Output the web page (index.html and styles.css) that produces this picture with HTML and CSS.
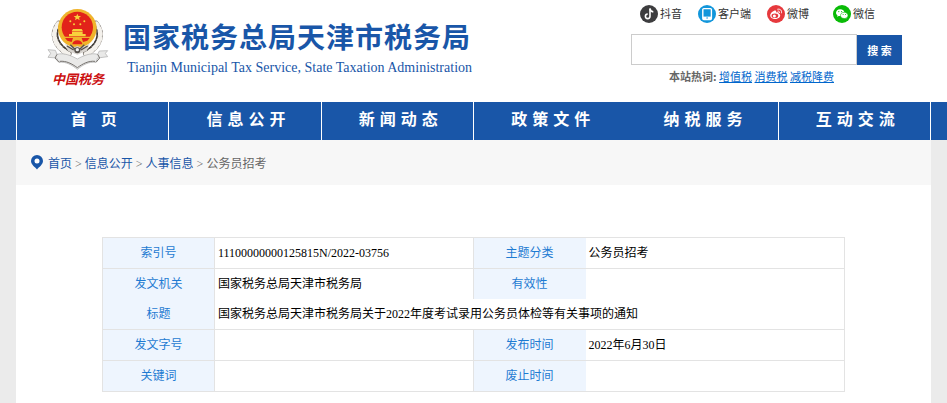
FILE: index.html
```
<!DOCTYPE html>
<html lang="zh-CN">
<head>
    <meta charset="UTF-8">
    <meta name="viewport" content="width=device-width, initial-scale=1.0">
    <title>国家税务总局天津市税务局</title>
    <link rel="stylesheet" href="styles.css">
</head>
<body>
    <header class="header">
        <div class="brand">
            <div class="emblem">
                <svg class="emblem-img" viewBox="22 24 186 186" aria-hidden="true">
                    <!-- wheat ears -->
                    <g fill="none" stroke-linecap="round">
                        <path d="M58 72C36 100 44 136 86 160M168 72C190 100 182 136 140 160" stroke="#77716a" stroke-width="20"/>
                        <path d="M56 72C34 100 42 138 86 162M170 72C192 100 184 138 140 162" stroke="#f4f1ec" stroke-width="15" stroke-dasharray="5 10"/>
                        <path d="M60 76C46 102 52 130 90 154M166 76C180 102 174 130 136 154" stroke="#3c3733" stroke-width="4" stroke-dasharray="6 6"/>
                    </g>
                    <!-- gold ring and red disc -->
                    <circle cx="113" cy="85" r="58" fill="#f0b42c"/>
                    <circle cx="113" cy="82" r="47" fill="#e2231a"/>
                    <path fill="#f8d13c" d="M113 41l3 7h8l-6 5 2 8-7-5-7 5 2-8-6-5h8z"/>
                    <g fill="#f8d13c">
                        <circle cx="92" cy="64" r="3"/><circle cx="103" cy="73" r="3"/>
                        <circle cx="122" cy="73" r="3"/><circle cx="134" cy="64" r="3"/>
                        <path d="M100 87h26l4 7h-34zM97 95h32v7h9v7H88v-7h9z"/>
                    </g>
                    <path d="M72 110h82l-6 16-17 10H94l-16-10z" fill="#f0b42c"/>
                    <path d="M76 114h24l-4 12-13-4zM150 114h-24l4 12 13-4z" fill="#e2231a"/>
                    <path d="M98 133c0-6 6-12 15-12s15 6 15 12z" fill="#e2231a"/>
                    <path d="M76 130q20 16 37 8 17 8 37-8l-8 22-29 12-29-12z" fill="#d8d4cf"/>
                    <path d="M82 138l20 12M92 134l20 20M144 138l-20 12M134 134l-20 20" stroke="#55504c" stroke-width="4"/>
                    <circle cx="113" cy="151" r="9" fill="#55504c"/>
                    <circle cx="113" cy="149" r="5" fill="#eee"/>
                    <!-- ribbon -->
                    <path d="M25 149l22 2 5 12c20-6 45 5 61 14 16-9 41-20 61-14l5-10 25-1-7 8 7 10-30 4-6 13c-20-3-39 8-55 21-16-13-35-24-55-21l-7-13-26-2 8-12z" fill="#e9e9e8" stroke="#aaa" stroke-width="2"/>
                    <path d="M52 163l-6 11 12 13M174 163l6 11-11 13M60 184c20-2 36 7 53 19 17-12 33-21 53-19" fill="none" stroke="#77736f" stroke-width="3"/>
                </svg>
                <span class="emblem-text">中国税务</span>
            </div>
            <div class="brand-name">
                <h1>国家税务总局天津市税务局</h1>
                <p>Tianjin Municipal Tax Service, State Taxation Administration</p>
            </div>
        </div>

        <div class="tools">
            <div class="social">
                <a href="#">
                    <svg viewBox="0 0 18 18" aria-hidden="true">
                        <circle cx="9" cy="9" r="9" fill="#3d3d3f"/>
                        <path d="M10 3.5v7.8a2.3 2.3 0 1 1-2.3-2.3" fill="none" stroke="#fff" stroke-width="1.6"/>
                        <path d="M10 3.7c.2 2 1.4 3 3.3 3.2" fill="none" stroke="#fff" stroke-width="1.6"/>
                    </svg>
                    <span>抖音</span>
                </a>
                <a href="#">
                    <svg viewBox="0 0 18 18" aria-hidden="true">
                        <circle cx="9" cy="9" r="9" fill="#1296db"/>
                        <rect x="4.8" y="3.6" width="8.6" height="11" rx="1" fill="none" stroke="#fff" stroke-width="1.4"/>
                        <path d="M5 12.8h8" stroke="#fff" stroke-width="2.4"/>
                        <circle cx="9.1" cy="13" r=".8" fill="#1296db"/>
                    </svg>
                    <span>客户端</span>
                </a>
                <a href="#">
                    <svg viewBox="0 0 18 18" aria-hidden="true">
                        <circle cx="9" cy="9" r="9" fill="#e6393d"/>
                        <path d="M8.4 5.6c-2 0-5.2 2.6-5.2 5 0 2 2.2 3.4 4.8 3.4 3 0 5.2-1.7 5.2-3.5 0-1.2-.8-1.7-1.6-2 .3-1.3-.8-1.7-2.5-1.1.1-.8.2-1.8-.7-1.8z" fill="#fff"/>
                        <ellipse cx="7.9" cy="10.7" rx="3.4" ry="2.3" fill="#e6393d"/>
                        <circle cx="7.4" cy="10.9" r="1.5" fill="#fff"/>
                        <path d="M10.8 4.2c2.6-.5 4.3 1.3 3.7 3.7M11 6.1c1.1-.1 1.7.5 1.5 1.5" fill="none" stroke="#fff" stroke-width="1" stroke-linecap="round"/>
                    </svg>
                    <span>微博</span>
                </a>
                <a href="#">
                    <svg viewBox="0 0 18 18" aria-hidden="true">
                        <circle cx="9" cy="9" r="9" fill="#09bb07"/>
                        <path d="M7.2 4.2C4.7 4.2 3 5.8 3 7.700c0 1.100.6 2 1.500 2.600l-.4 1.400 1.600-.8c.5.100 1 .2 1.500.2 2.500 0 4.300-1.500 4.300-3.400S9.700 4.200 7.200 4.200z" fill="#fff"/>
                        <path d="M11.300 7.300c-2.200 0-3.800 1.400-3.800 3.100s1.600 3.100 3.800 3.100c.4 0 .8-.1 1.200-.2l1.400.8-.4-1.300c.9-.6 1.500-1.400 1.500-2.400 0-1.700-1.600-3.100-3.700-3.100z" fill="#fff" stroke="#09bb07" stroke-width=".6"/>
                        <g fill="#09bb07">
                            <circle cx="5.8" cy="6.6" r=".6"/><circle cx="8.6" cy="6.6" r=".6"/>
                            <circle cx="10.1" cy="9.6" r=".5"/><circle cx="12.5" cy="9.6" r=".5"/>
                        </g>
                    </svg>
                    <span>微信</span>
                </a>
            </div>
            <form class="search">
                <input type="text" aria-label="搜索">
                <button type="button">搜 索</button>
            </form>
            <p class="hot"><b>本站热词:</b> <a href="#">增值税</a> <a href="#">消费税</a> <a href="#">减税降费</a></p>
        </div>
    </header>

    <nav class="nav">
        <ul>
            <li><a href="#">首 页</a></li>
            <li><a href="#">信息公开</a></li>
            <li><a href="#">新闻动态</a></li>
            <li class="no-line"><a href="#">政策文件</a></li>
            <li><a href="#">纳税服务</a></li>
            <li><a href="#">互动交流</a></li>
        </ul>
    </nav>

    <main class="content">
        <div class="crumbs">
            <svg viewBox="0 0 12 15" aria-hidden="true">
                <path d="M6 0a6 6 0 0 0-6 6c0 3.500 4 6 6 8.500C8 12 12 9.500 12 6a6 6 0 0 0-6-6z" fill="#1956a8"/>
                <circle cx="6" cy="6" r="2.500" fill="#fff"/>
            </svg>
            <p><a href="#">首页</a> &gt; <a href="#">信息公开</a> &gt; <a href="#">人事信息</a> &gt; 公务员招考</p>
        </div>

        <table class="info">
            <tr>
                <th>索引号</th>
                <td class="line">11100000000125815N/2022-03756</td>
                <th>主题分类</th>
                <td>公务员招考</td>
            </tr>
            <tr class="open">
                <th>发文机关</th>
                <td class="line">国家税务总局天津市税务局</td>
                <th>有效性</th>
                <td></td>
            </tr>
            <tr>
                <th>标题</th>
                <td colspan="3">国家税务总局天津市税务局关于2022年度考试录用公务员体检等有关事项的通知</td>
            </tr>
            <tr>
                <th>发文字号</th>
                <td class="line"></td>
                <th>发布时间</th>
                <td>2022年6月30日</td>
            </tr>
            <tr>
                <th>关键词</th>
                <td class="line"></td>
                <th>废止时间</th>
                <td></td>
            </tr>
        </table>
    </main>
</body>
</html>
```
FILE: styles.css
```
* {
    box-sizing: border-box;
}

body {
    margin: 0;
    background-color: #ebebeb;
    font-family: "Liberation Serif", "Noto Sans CJK SC", serif;
    font-size: 12px;
}

h1, p, ul {
    margin: 0;
    padding: 0;
}

/* header */
.header {
    display: flex;
    justify-content: space-between;
    align-items: flex-start;
    height: 102px;
    padding: 0 45px;
    background-color: #fff;
}

.brand {
    display: flex;
}

.emblem {
    display: flex;
    flex-direction: column;
    align-items: center;
    width: 66px;
    padding-top: 8px;
}

.emblem-img {
    width: 62px;
    height: 62px;
}

.emblem-text {
    color: #cc1010;
    font-size: 13px;
    font-style: italic;
    font-weight: bold;
    line-height: 20px;
}

.brand-name {
    padding: 19px 0 0 12px;
    color: #1956a8;
}

.brand-name h1 {
    font-size: 28px;
    line-height: 40px;
    letter-spacing: 1px;
}

.brand-name p {
    padding-left: 4px;
    font-size: 14px;
    line-height: 18px;
}

.tools {
    width: 271px;
    padding-top: 5px;
    font-family: "Noto Sans CJK SC", sans-serif;
    font-size: 11px;
}

.social {
    display: grid;
    grid-template-columns: 58px 69px 66px auto;
    padding-left: 9px;
}

.social a {
    display: flex;
    gap: 2px;
    color: #333;
    line-height: 16px;
    text-decoration: none;
}

.social svg {
    width: 18px;
    height: 18px;
}

.search {
    display: flex;
    align-items: flex-end;
    margin-top: 11px;
}

.search input {
    flex: 1;
    min-width: 0;
    height: 31px;
    border: 1px solid #ccc;
    background-color: #fff;
}

.search button {
    width: 45px;
    height: 30px;
    padding: 0;
    border: 0;
    background-color: #1956a8;
    color: #fff;
    font-family: inherit;
    font-size: 11px;
    font-weight: bold;
}

.hot {
    padding-left: 38px;
    color: #666;
    line-height: 22px;
}

.hot a {
    color: #0066cc;
}

/* navigation */
.nav {
    padding: 0 16px;
    background-color: #1956a8;
}

.nav ul {
    display: flex;
    border-left: 1px solid #fff;
    list-style: none;
}

.nav li {
    flex: 1;
    border-right: 1px solid #fff;
}

.nav .no-line {
    border-right-color: transparent;
}

.nav a {
    display: block;
    height: 38px;
    padding-left: 7px;
    color: #fff;
    font-size: 16px;
    font-weight: bold;
    letter-spacing: 5px;
    line-height: 36px;
    text-align: center;
    text-decoration: none;
}

/* page content */
.content {
    min-height: 263px;
    margin: 0 16px;
    padding-bottom: 11px;
    background-color: #fff;
}

.crumbs {
    display: flex;
    align-items: center;
    gap: 5px;
    height: 45px;
    padding-left: 15px;
    background-color: #f7f7f7;
    color: #666;
}

.crumbs svg {
    width: 12px;
    height: 15px;
}

.crumbs a {
    color: #1956a8;
    text-decoration: none;
}

.info {
    width: calc(100% - 172px);
    margin: 52px 86px 0;
    border: 1px solid #e3e3e3;
    border-bottom: 0;
    border-spacing: 0;
    table-layout: fixed;
}

.info th,
.info td {
    height: 31px;
    padding: 0 3px;
    border-bottom: 1px solid #e3e3e3;
    line-height: 30px;
    text-align: left;
}

.info th {
    width: 112px;
    background-color: #eef5fe;
    color: #1e7bd2;
    font-weight: normal;
    text-align: center;
}

.info .line {
    border-right: 1px solid #e3e3e3;
}

.info th:first-child {
    border-right: 1px solid #e3e3e3;
}

.info .open th,
.info .open td {
    height: 30px;
    border-bottom: 0;
}
```
